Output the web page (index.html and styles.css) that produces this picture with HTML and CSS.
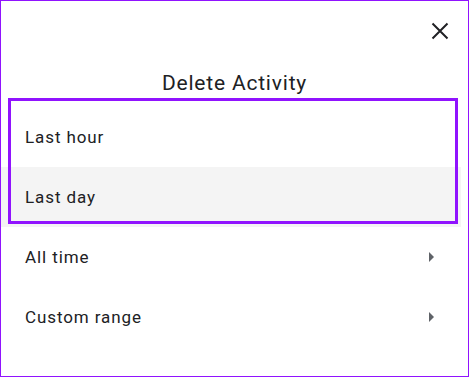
FILE: index.html
```html
<!DOCTYPE html>
<html>
<head>
<meta charset="utf-8">
<link rel="stylesheet" href="styles.css">
</head>
<body>
<div class="dialog">
  <div class="header">
    <button class="close" aria-label="Close">
      <svg width="24" height="24" viewBox="0 0 24 24"><path d="M4.5 4.5 L19.5 19.5 M19.5 4.5 L4.5 19.5" stroke="#202124" stroke-width="2" fill="none"/></svg>
    </button>
  </div>
  <h1 class="title">Delete Activity</h1>
  <div class="list">
    <div class="row"><span>Last hour</span></div>
    <div class="row row-hover"><span>Last day</span></div>
    <div class="row"><span>All time</span><span class="arrow"></span></div>
    <div class="row"><span>Custom range</span><span class="arrow"></span></div>
    <div class="highlight"></div>
  </div>
</div>
</body>
</html>
```
FILE: styles.css
```css
html, body {
  margin: 0;
  padding: 0;
  background: #fff;
}
body {
  font-family: Roboto, "Liberation Sans", sans-serif;
  color: #202124;
}
.dialog {
  width: 469px;
  height: 377px;
  box-sizing: border-box;
  border: 1px solid #9013fe;
  background: #fff;
}
.header {
  display: flex;
  justify-content: flex-end;
  padding: 18px 16px 0 0;
}
.close {
  width: 24px;
  height: 24px;
  padding: 0;
  border: 0;
  background: none;
  display: flex;
}
.title {
  margin: 26px 0 10px;
  font-size: 21px;
  line-height: 28px;
  font-weight: 400;
  letter-spacing: 0.8px;
  text-align: center;
  color: #202124;
}
.list {
  position: relative;
  margin-right: 7px;
}
.row {
  height: 60px;
  display: flex;
  align-items: center;
  justify-content: space-between;
  padding: 0 27px 0 24px;
  font-size: 17px;
  letter-spacing: 0.9px;
  color: #202124;
}
.row-hover {
  background: #f4f4f4;
}
.arrow {
  width: 0;
  height: 0;
  border-top: 5px solid transparent;
  border-bottom: 5px solid transparent;
  border-left: 5px solid #5f6368;
}
.highlight {
  position: absolute;
  left: 7px;
  top: -9px;
  width: 450px;
  height: 126px;
  box-sizing: border-box;
  border: 3px solid #9013fe;
}
```
